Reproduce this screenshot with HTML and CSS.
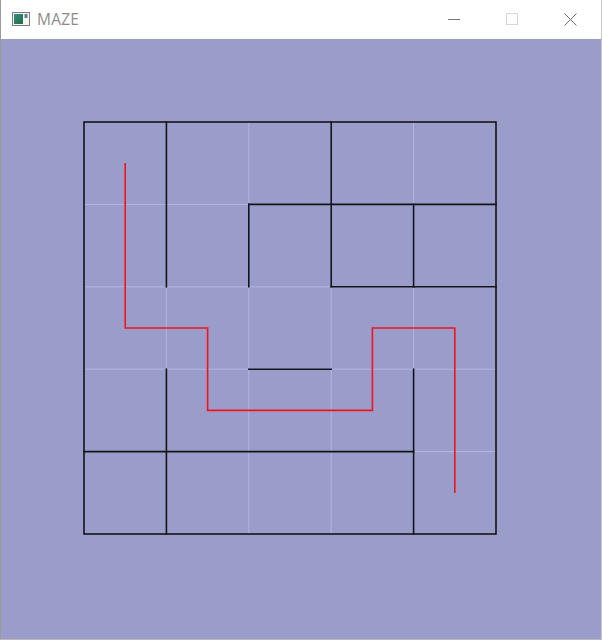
FILE: index.html
```html
<!DOCTYPE html>
<html>
<head>
<meta charset="utf-8">
<link rel="stylesheet" href="styles.css">
</head>
<body>
<div class="window">
  <div class="titlebar">
    <div class="app-icon">
      <svg width="18" height="14" viewBox="0 0 18 14">
        <defs>
          <linearGradient id="g" x1="0" y1="0" x2="1" y2="1">
            <stop offset="0" stop-color="#3b8a8a"/>
            <stop offset="1" stop-color="#1d6e3f"/>
          </linearGradient>
        </defs>
        <rect x="0.5" y="0.5" width="17" height="13" fill="#f4f4f4" stroke="#7a7a7a"/>
        <rect x="2" y="2" width="9" height="10" fill="url(#g)"/>
        <rect x="12.5" y="2" width="3" height="4" fill="#5a7aa0"/>
      </svg>
    </div>
    <span class="title">MAZE</span>
    <div class="controls">
      <div class="ctl">
        <svg width="12" height="12" viewBox="0 0 12 12"><line x1="0" y1="6.5" x2="12" y2="6.5" stroke="#777" stroke-width="1"/></svg>
      </div>
      <div class="ctl">
        <svg width="12" height="12" viewBox="0 0 12 12"><rect x="0.5" y="0.5" width="11" height="11" fill="none" stroke="#d6d6d6" stroke-width="1"/></svg>
      </div>
      <div class="ctl">
        <svg width="13" height="13" viewBox="0 0 13 13"><path d="M0.5 0.5 L12.5 12.5 M12.5 0.5 L0.5 12.5" stroke="#6a6a6a" stroke-width="1"/></svg>
      </div>
    </div>
  </div>
  <div class="client">
    <svg class="maze" width="600" height="599" viewBox="1 39 600 599">
      <g class="grid">
        <line x1="84" y1="204.4" x2="496" y2="204.4"/>
        <line x1="84" y1="286.8" x2="496" y2="286.8"/>
        <line x1="84" y1="369.2" x2="496" y2="369.2"/>
        <line x1="84" y1="451.6" x2="496" y2="451.6"/>
        <line x1="166.4" y1="122" x2="166.4" y2="534"/>
        <line x1="248.8" y1="122" x2="248.8" y2="534"/>
        <line x1="331.2" y1="122" x2="331.2" y2="534"/>
        <line x1="413.6" y1="122" x2="413.6" y2="534"/>
      </g>
      <g class="walls">
        <rect x="84" y="122" width="412" height="412" fill="none"/>
        <line x1="166.4" y1="122" x2="166.4" y2="286.8"/>
        <line x1="331.2" y1="122" x2="331.2" y2="286.8"/>
        <line x1="248.8" y1="204.4" x2="248.8" y2="286.8"/>
        <line x1="413.6" y1="204.4" x2="413.6" y2="286.8"/>
        <line x1="166.4" y1="369.2" x2="166.4" y2="534"/>
        <line x1="413.6" y1="369.2" x2="413.6" y2="534"/>
        <line x1="248.8" y1="204.4" x2="496" y2="204.4"/>
        <line x1="331.2" y1="286.8" x2="496" y2="286.8"/>
        <line x1="248.8" y1="369.2" x2="331.2" y2="369.2"/>
        <line x1="84" y1="451.6" x2="413.6" y2="451.6"/>
      </g>
      <polyline class="path" points="125.2,163 125.2,328 207.6,328 207.6,410.4 372.4,410.4 372.4,328 454.8,328 454.8,493"/>
    </svg>
  </div>
</div>
</body>
</html>
```

FILE: styles.css
```css
* { box-sizing: border-box; }
html, body { margin: 0; padding: 0; }
body {
  width: 602px;
  height: 640px;
  background: #b8b8b8;
  overflow: hidden;
}
.window {
  width: 602px;
  height: 639px;
  border-left: 1px solid #9a9a9a;
  border-right: 1px solid #c8c8c8;
  display: flex;
  flex-direction: column;
  background: #ffffff;
}
.titlebar {
  height: 39px;
  display: flex;
  align-items: center;
  background: #ffffff;
  padding-left: 11px;
}
.app-icon {
  width: 18px;
  height: 14px;
  display: flex;
  margin-top: -2px;
}
.title {
  font-family: "Open Sans", "Noto Sans", sans-serif;
  font-size: 15.5px;
  color: #8d8d8d;
  margin-left: 7px;
  margin-top: -2px;
  letter-spacing: 0.2px;
}
.controls {
  margin-left: auto;
  margin-right: 2px;
  display: flex;
  height: 100%;
}
.ctl {
  width: 58px;
  height: 100%;
  display: flex;
  align-items: center;
  justify-content: center;
  padding-bottom: 1px;
}
.client {
  flex: 1;
  background: #9a9cca;
  display: flex;
}
.maze { display: block; }
.grid line {
  stroke: #b3b5e0;
  stroke-width: 1;
}
.walls line, .walls rect {
  stroke: #141418;
  stroke-width: 1.6;
  stroke-linecap: square;
}
.path {
  fill: none;
  stroke: #f0141e;
  stroke-width: 1.6;
}
```
